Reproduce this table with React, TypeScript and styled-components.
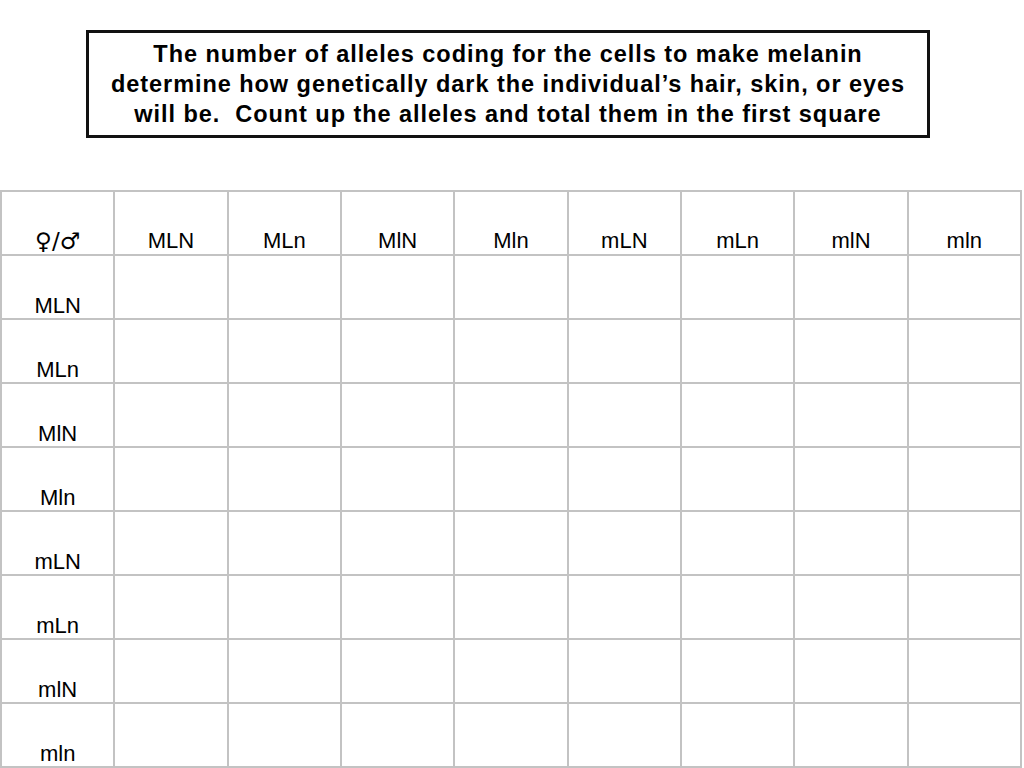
import React from "react";
import styled, { createGlobalStyle } from "styled-components";

const GlobalStyle = createGlobalStyle`
  html, body {
    margin: 0;
    padding: 0;
    background: #ffffff;
  }
  body {
    font-family: "Liberation Sans", Arial, sans-serif;
    color: #000;
  }
`;

const Page = styled.div`
  width: 1024px;
  height: 768px;
  overflow: hidden;
  display: flex;
  flex-direction: column;
`;

const TitleBox = styled.div`
  box-sizing: border-box;
  margin: 30px 0 0 86px;
  width: 844px;
  border: 3px solid #111;
  padding: 6px 0 6px 0;
  text-align: center;
  font-family: "Liberation Sans", Arial, sans-serif;
  font-weight: bold;
  font-size: 23.5px;
  letter-spacing: 0.95px;
  line-height: 30px;
  color: #000;
  white-space: nowrap;
`;

const Grid = styled.div`
  box-sizing: border-box;
  margin-top: 52px;
  width: 1022px;
  display: grid;
  grid-template-columns: repeat(9, 1fr);
  grid-auto-rows: 62px;
  gap: 2px;
  padding: 2px;
  background: #c3c3c3;
`;

const Cell = styled.div<{ $header?: boolean }>`
  background: #ffffff;
  display: flex;
  align-items: flex-end;
  justify-content: center;
  font-family: "Liberation Sans", Arial, "DejaVu Sans", sans-serif;
  font-size: 22px;
  line-height: 24px;
  padding-bottom: ${(p) => (p.$header ? "1px" : "0px")};
  color: #000;
`;

const Symbols = styled.span`
  font-family: "DejaVu Sans", "Liberation Sans", sans-serif;
  font-size: 23px;
`;

const alleles = ["MLN", "MLn", "MlN", "Mln", "mLN", "mLn", "mlN", "mln"];

export default function App() {
  return (
    <>
      <GlobalStyle />
      <Page>
        <TitleBox>
          The number of alleles coding for the cells to make melanin
          <br />
          determine how genetically dark the individual’s hair, skin, or eyes
          <br />
          {"will be.\u00a0 Count up the alleles and total them in the first square"}
        </TitleBox>
        <Grid>
          <Cell $header>
            <Symbols>♀/♂</Symbols>
          </Cell>
          {alleles.map((a) => (
            <Cell $header key={"h" + a}>
              {a}
            </Cell>
          ))}
          {alleles.map((row) => (
            <React.Fragment key={row}>
              <Cell>{row}</Cell>
              {alleles.map((c) => (
                <Cell key={row + c} />
              ))}
            </React.Fragment>
          ))}
        </Grid>
      </Page>
    </>
  );
}
